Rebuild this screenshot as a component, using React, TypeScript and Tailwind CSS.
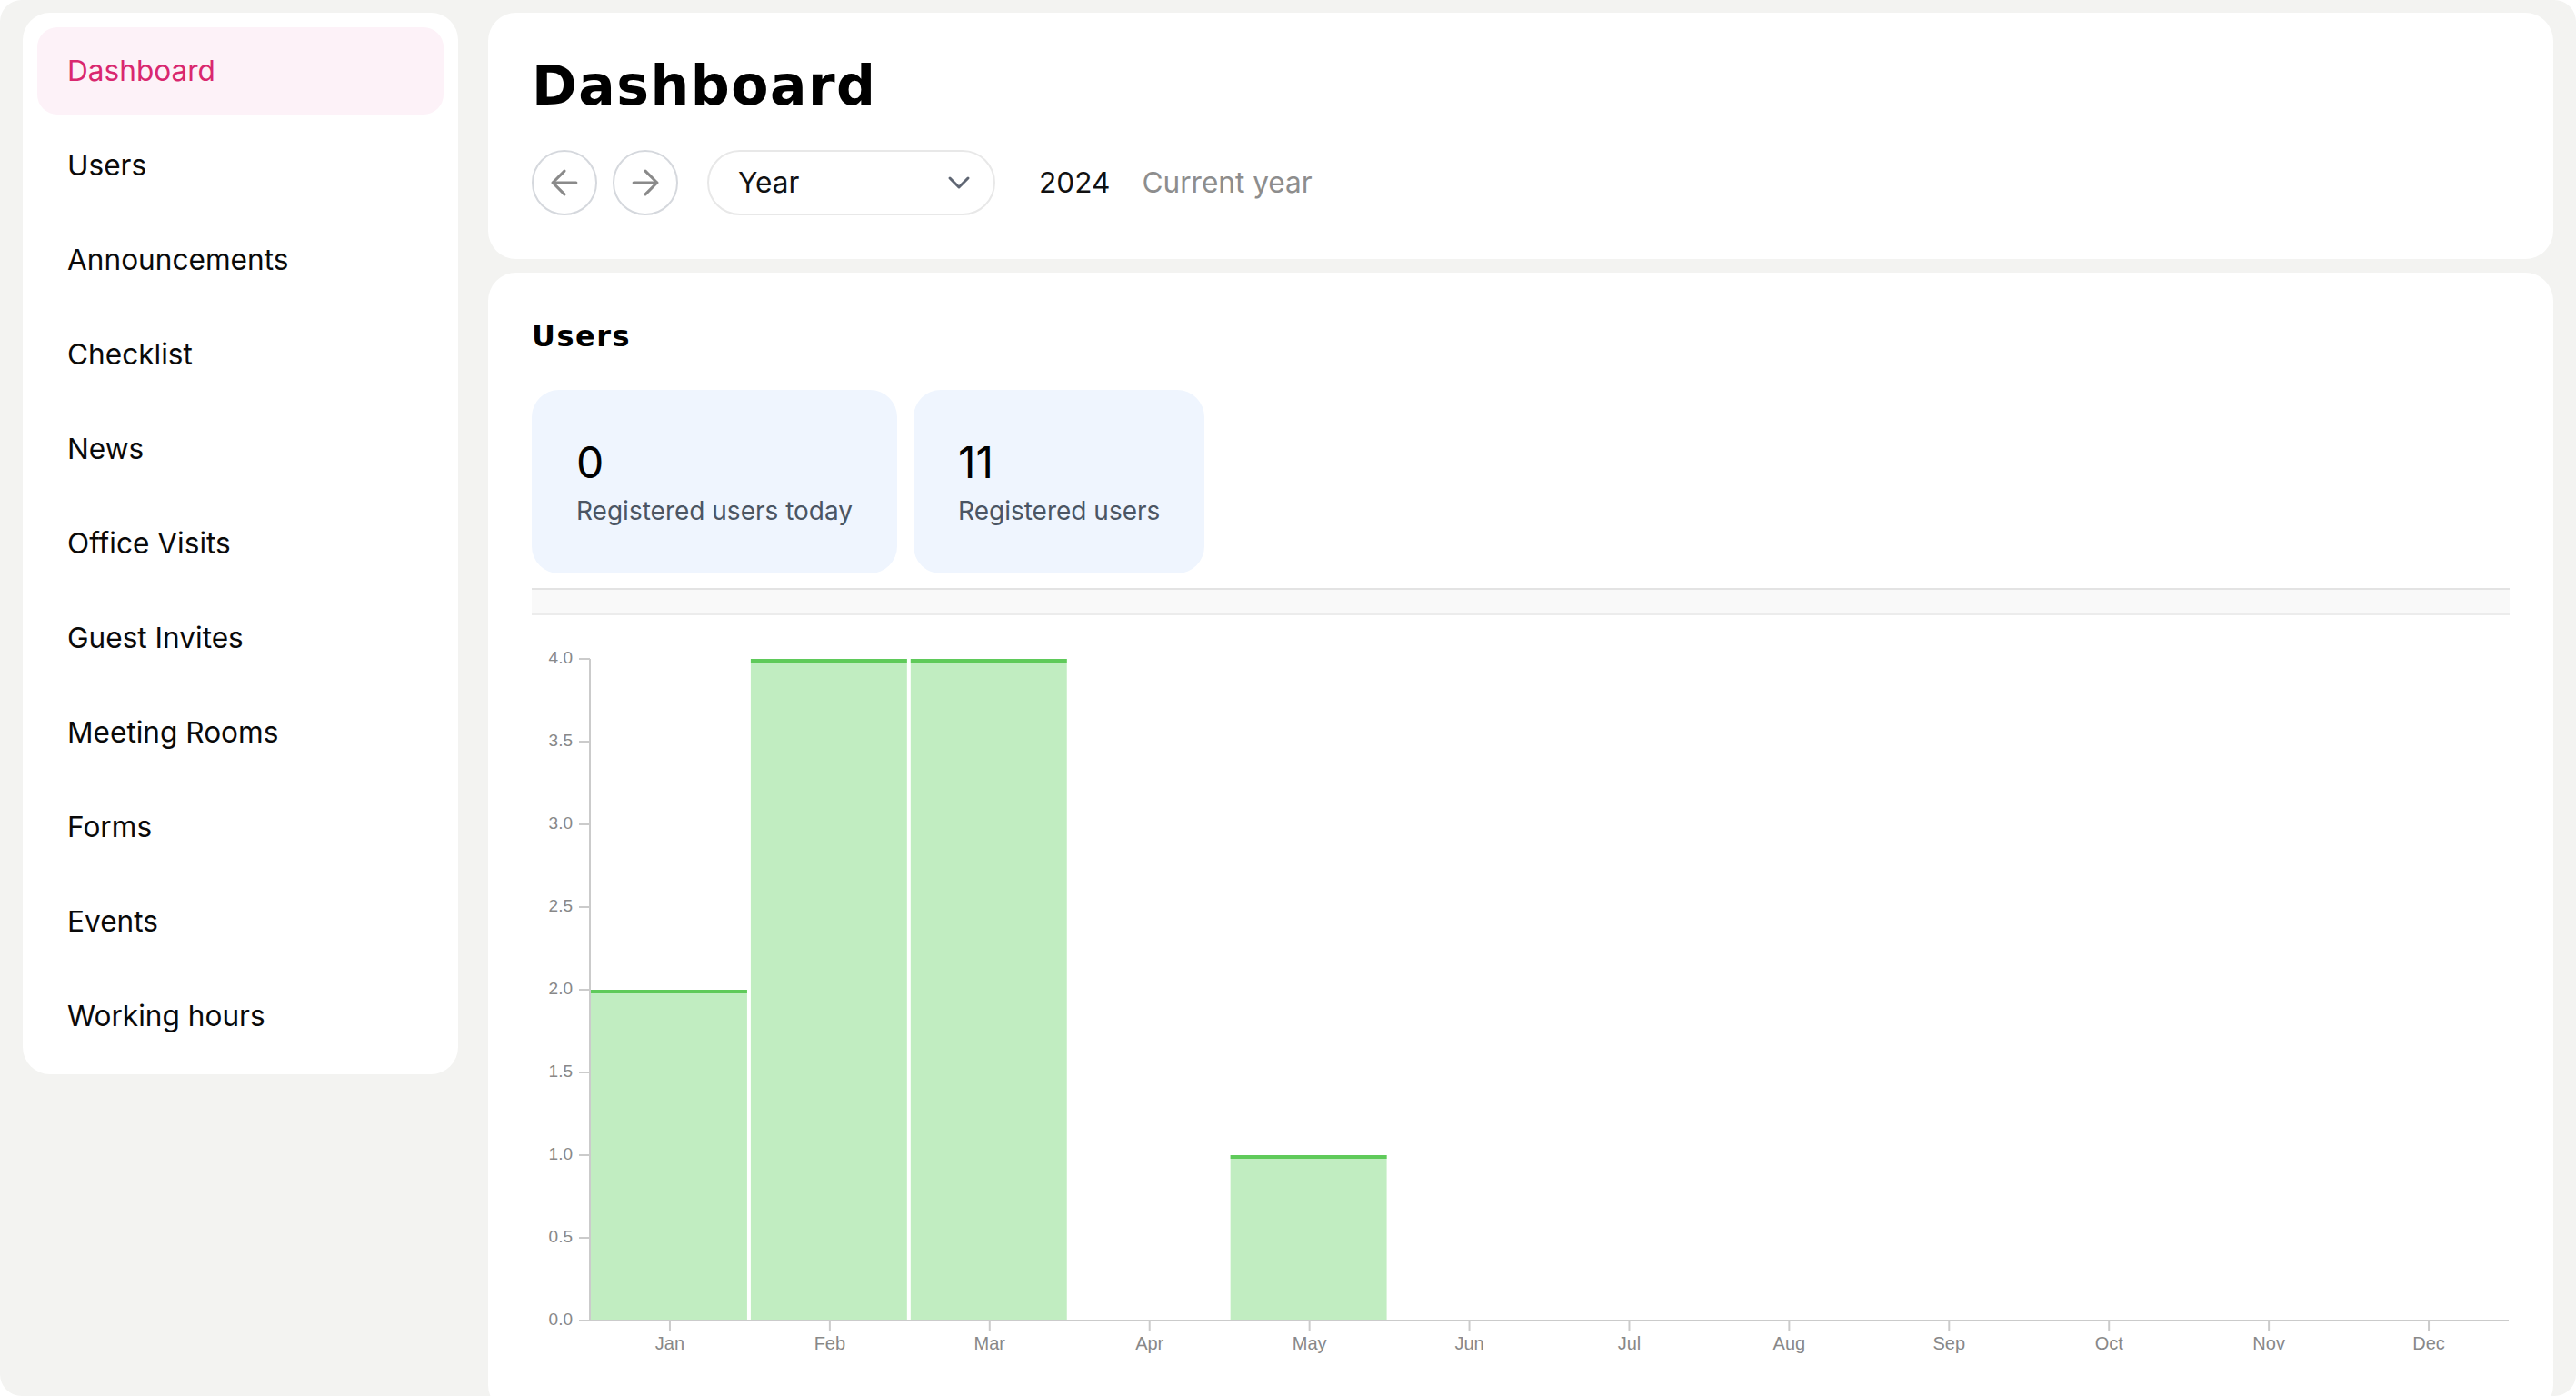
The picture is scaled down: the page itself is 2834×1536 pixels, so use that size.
import React from 'react';
import { ArrowLeft, ArrowRight, ChevronDown } from 'lucide-react';

const navItems = [
  'Dashboard',
  'Users',
  'Announcements',
  'Checklist',
  'News',
  'Office Visits',
  'Guest Invites',
  'Meeting Rooms',
  'Forms',
  'Events',
  'Working hours',
];

const months = ['Jan', 'Feb', 'Mar', 'Apr', 'May', 'Jun', 'Jul', 'Aug', 'Sep', 'Oct', 'Nov', 'Dec'];
const values = [2, 4, 4, 0, 1, 0, 0, 0, 0, 0, 0, 0];

const UsersChart: React.FC = () => {
  const x0 = 64;
  const x1 = 2175;
  const y0 = 776;
  const unit = 182;
  const band = (x1 - x0) / 12;
  const yTicks = [0, 0.5, 1, 1.5, 2, 2.5, 3, 3.5, 4];

  return (
    <svg width="2176" height="830" viewBox="0 0 2176 830" className="block">
      {/* bars */}
      {values.map((v, i) => {
        if (!v) return null;
        const x = x0 + band * i + 1;
        const top = y0 - v * unit;
        return (
          <g key={months[i]}>
            <rect x={x} y={top} width={band - 4} height={y0 - top} fill="#c1edc1" />
            <rect x={x} y={top} width={band - 4} height={4} fill="#5fca5a" />
          </g>
        );
      })}

      {/* y axis */}
      <line x1={x0} y1={48} x2={x0} y2={y0} stroke="#cbcbcb" strokeWidth="2" />
      {yTicks.map((t) => {
        const y = y0 - t * unit;
        return (
          <g key={t}>
            <line x1={52} y1={y} x2={x0} y2={y} stroke="#cbcbcb" strokeWidth="2" />
            <text
              x={45}
              y={y}
              textAnchor="end"
              dominantBaseline="middle"
              fill="#888888"
              fontSize="19"
              fontFamily="'Liberation Sans', Arial, sans-serif"
            >
              {t.toFixed(1)}
            </text>
          </g>
        );
      })}

      {/* x axis */}
      <line x1={52} y1={y0} x2={x1} y2={y0} stroke="#cbcbcb" strokeWidth="2" />
      {months.map((m, i) => {
        const cx = x0 + band * (i + 0.5);
        return (
          <g key={m}>
            <line x1={cx} y1={y0} x2={cx} y2={y0 + 12} stroke="#cbcbcb" strokeWidth="2" />
            <text
              x={cx}
              y={803}
              textAnchor="middle"
              dominantBaseline="middle"
              fill="#888888"
              fontSize="20"
              fontFamily="'Liberation Sans', Arial, sans-serif"
            >
              {m}
            </text>
          </g>
        );
      })}
    </svg>
  );
};

const App: React.FC = () => {
  return (
    <div className="min-h-screen bg-white font-['Inter',sans-serif] text-[#0a0a0a]">
      <div className="flex h-[1536px] gap-[33px] overflow-hidden rounded-[24px] bg-[#f3f3f1] px-[25px] pt-[14px]">
        {/* Sidebar */}
        <aside className="flex w-[479px] shrink-0 flex-col gap-[8px] self-start rounded-[30px] bg-white px-[16px] pt-[16px] pb-[16px]">
          {navItems.map((item, i) => (
            <div
              key={item}
              className={`flex h-[96px] items-center rounded-[22px] px-[33px] text-[31.6px] ${
                i === 0 ? 'bg-[#fdf2f8] text-[#d9286f]' : 'text-[#0a0a0a]'
              }`}
            >
              {item}
            </div>
          ))}
        </aside>

        {/* Main */}
        <main className="flex min-w-0 flex-1 flex-col gap-[15px]">
          <section className="shrink-0 rounded-[31px] bg-white px-[48px] pt-[50px] pb-[48px]">
            <h1 className="font-['DejaVu_Sans',sans-serif] text-[60px] leading-none font-bold tracking-[1.5px] text-black">
              Dashboard
            </h1>
            <div className="mt-[41px] flex h-[72px] items-center">
              <button className="flex h-[72px] w-[72px] items-center justify-center rounded-full border-2 border-[#d5d8dd]">
                <ArrowLeft size={44} strokeWidth={1.7} color="#8a8a8a" />
              </button>
              <button className="ml-[17px] flex h-[72px] w-[72px] items-center justify-center rounded-full border-2 border-[#d5d8dd]">
                <ArrowRight size={44} strokeWidth={1.7} color="#8a8a8a" />
              </button>
              <div className="ml-[32px] flex h-[72px] w-[317px] items-center justify-between rounded-full border-2 border-[#e8e8e8] pr-[18px] pl-[32px]">
                <span className="text-[31.6px] text-[#111]">Year</span>
                <ChevronDown size={40} strokeWidth={1.8} color="#5f6673" />
              </div>
              <span className="ml-[48px] text-[31.6px] text-[#111]">2024</span>
              <span className="ml-[35px] text-[31.6px] text-[#8d8d8d]">Current year</span>
            </div>
          </section>

          <section className="flex-1 shrink-0 rounded-[31px] bg-white px-[48px] pt-[54px] pb-[48px]">
            <h2 className="font-['DejaVu_Sans',sans-serif] text-[32px] leading-none font-bold tracking-[1.5px] text-black">
              Users
            </h2>
            <div className="mt-[43px] flex gap-[18px]">
              <div className="flex flex-col gap-[5px] rounded-[30px] bg-[#eff5fe] px-[49px] pt-[51px] pb-[49px]">
                <span className="text-[48px] leading-[1.2] text-black">0</span>
                <span className="text-[28px] leading-[1.4] text-[#4b5563]">Registered users today</span>
              </div>
              <div className="flex flex-col gap-[5px] rounded-[30px] bg-[#eff5fe] px-[49px] pt-[51px] pb-[49px]">
                <span className="text-[48px] leading-[1.2] text-black">11</span>
                <span className="text-[28px] leading-[1.4] text-[#4b5563]">Registered users</span>
              </div>
            </div>
            <div className="mt-[16px] h-[30px] border-t-2 border-b-2 border-t-[#e3e3e3] border-b-[#ececec] bg-[#f9f9f9]" />
            <UsersChart />
          </section>
        </main>
      </div>
    </div>
  );
};

export default App;
